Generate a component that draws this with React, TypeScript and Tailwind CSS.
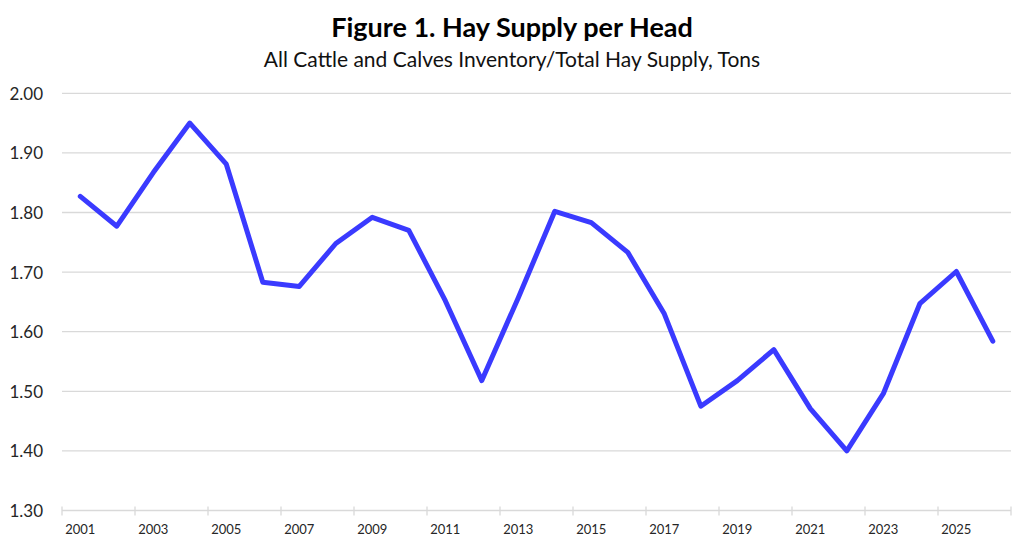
const values = [
  1.827, 1.777, 1.867, 1.95, 1.881, 1.683, 1.676, 1.748, 1.792, 1.77, 1.652, 1.518, 1.657,
  1.802, 1.783, 1.733, 1.63, 1.475, 1.518, 1.57, 1.471, 1.4, 1.496, 1.647, 1.701, 1.584,
]

const left = 62
const right = 1011
const top = 93.3
const bottom = 510.5
const step = (right - left) / values.length

const yOf = (v: number) => bottom - ((v - 1.3) / 0.7) * (bottom - top)
const xOf = (i: number) => left + step * (i + 0.5)

const ticks = [2.0, 1.9, 1.8, 1.7, 1.6, 1.5, 1.4, 1.3]

export default function App() {
  const points = values.map((v, i) => `${xOf(i).toFixed(1)},${yOf(v).toFixed(1)}`).join(" ")

  return (
    <div className="w-[1024px] h-[546px] bg-white flex flex-col overflow-hidden font-['Lato',sans-serif] text-[#1a1a1a]">
      <div className="h-[80px] flex flex-col items-center pt-[12px]">
        <h1 className="text-[27px] leading-[30px] font-bold text-black">Figure 1. Hay Supply per Head</h1>
        <p className="mt-[5px] text-[21px] leading-[24px] text-[#111]">
          All Cattle and Calves Inventory/Total Hay Supply, Tons
        </p>
      </div>

      <svg width="1024" height="466" viewBox="0 80 1024 466" className="block">
        {ticks.map((t) => {
          const y = yOf(t)
          return (
            <g key={t}>
              <line x1={left} x2={right} y1={y} y2={y} stroke="#d9d9d9" strokeWidth="1.3" />
              <text
                x="43"
                y={y}
                textAnchor="end"
                dominantBaseline="central"
                fontSize="17"
                fill="#262626"
                fontFamily="Lato, sans-serif"
              >
                {t.toFixed(2)}
              </text>
            </g>
          )
        })}

        {Array.from({ length: values.length / 2 + 1 }).map((_, k) => {
          const x = left + step * 2 * k
          return <line key={k} x1={x} x2={x} y1={bottom - 4} y2={bottom + 5} stroke="#d9d9d9" strokeWidth="1.3" />
        })}

        {values.map((_, i) =>
          i % 2 === 0 ? (
            <text
              key={i}
              x={xOf(i)}
              y="534"
              textAnchor="middle"
              fontSize="13"
              fill="#262626"
              fontFamily="Lato, sans-serif"
            >
              {2001 + i}
            </text>
          ) : null
        )}

        <polyline
          points={points}
          fill="none"
          stroke="#3a3aff"
          strokeWidth="5"
          strokeLinejoin="round"
          strokeLinecap="round"
        />
      </svg>
    </div>
  )
}
